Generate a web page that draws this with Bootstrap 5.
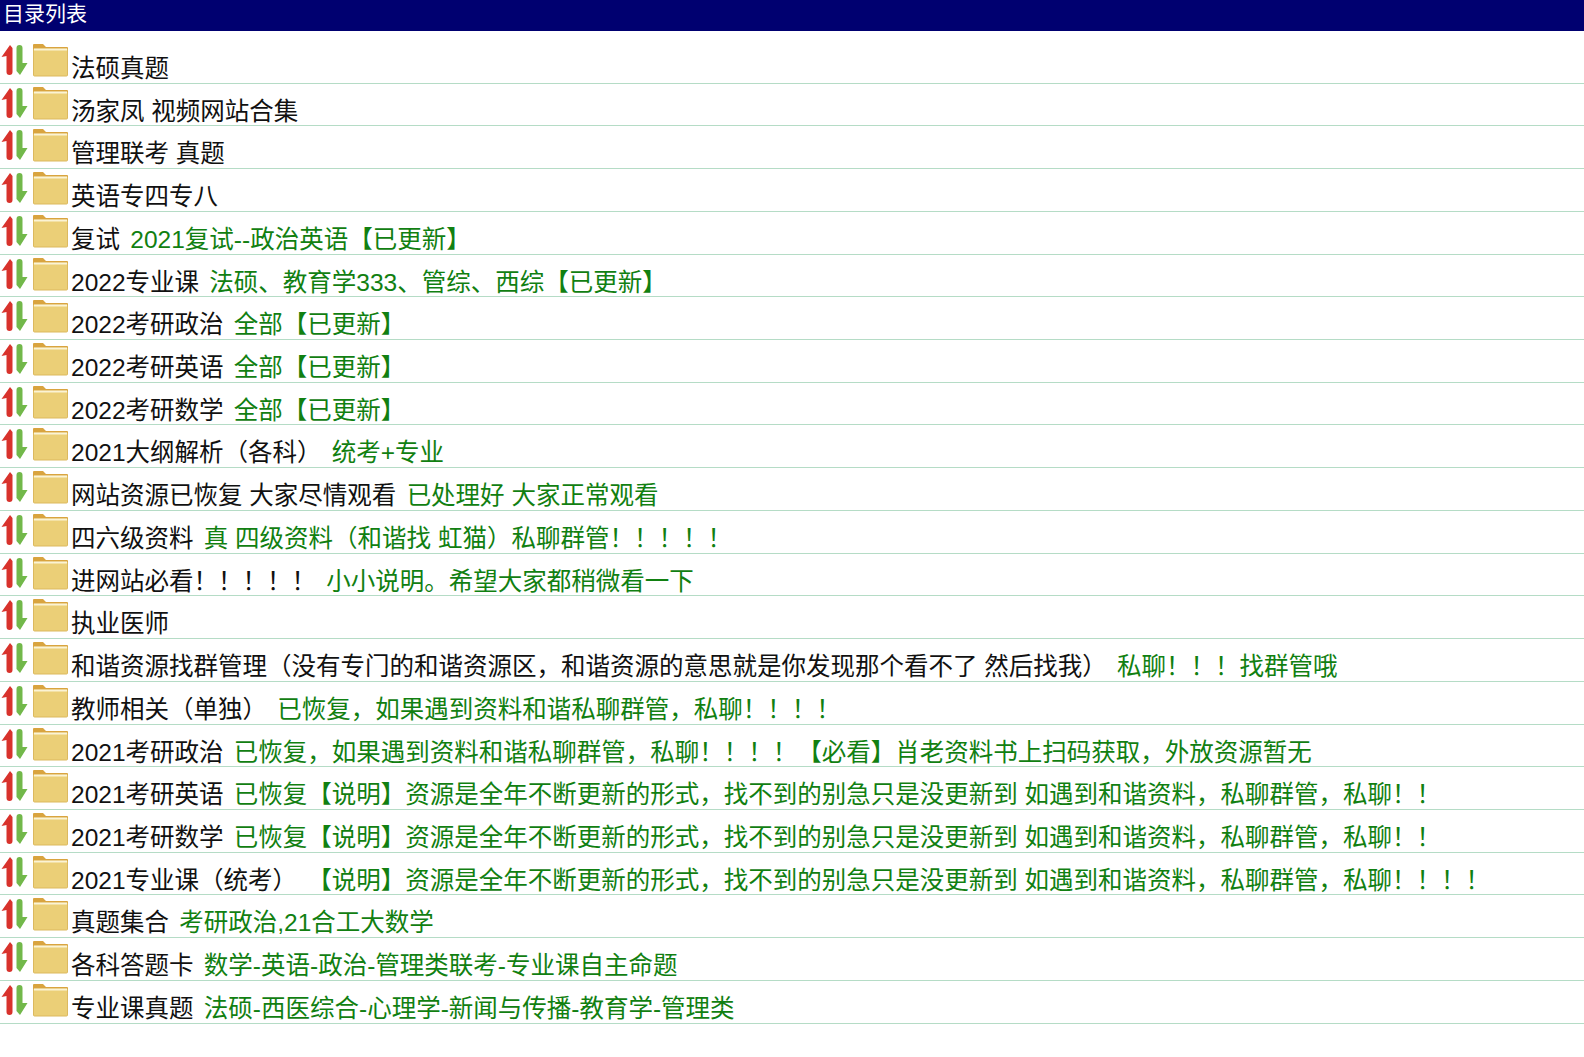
<!DOCTYPE html>
<html lang="zh"><head><meta charset="utf-8"><title>目录列表</title>
<link href="https://cdn.jsdelivr.net/npm/bootstrap@5.3.0/dist/css/bootstrap.min.css" rel="stylesheet">
<style>
body{font-family:"Liberation Sans","Noto Sans CJK SC",sans-serif;color:#000;background:#fff}
.dir-head{background:#000070;color:#fff;height:31px;font-size:21px;line-height:28px;padding-left:3px}
.dir-list{padding-top:10px}
.dir-row{height:42.72px;border-bottom:1px solid #b5dcc6;font-size:24.5px;line-height:30px;color:#111;overflow:hidden;white-space:nowrap}
.dir-ico{flex:none}
.dir-txt{padding-left:1px;padding-top:13px}
.dir-note{color:#118011;margin-left:3.5px}
</style></head><body>
<div class="dir-head">目录列表</div>
<div class="dir-list" id="L"></div>
<script>
const R=[["法硕真题",""],["汤家凤 视频网站合集",""],["管理联考 真题",""],["英语专四专八",""],["复试","2021复试--政治英语【已更新】"],["2022专业课","法硕、教育学333、管综、西综【已更新】"],["2022考研政治","全部【已更新】"],["2022考研英语","全部【已更新】"],["2022考研数学","全部【已更新】"],["2021大纲解析（各科）","统考+专业"],["网站资源已恢复 大家尽情观看","已处理好 大家正常观看"],["四六级资料","真 四级资料（和谐找 虹猫）私聊群管！！！！！"],["进网站必看！！！！！","小小说明。希望大家都稍微看一下"],["执业医师",""],["和谐资源找群管理（没有专门的和谐资源区，和谐资源的意思就是你发现那个看不了 然后找我）","私聊！！！找群管哦"],["教师相关（单独）","已恢复，如果遇到资料和谐私聊群管，私聊！！！！"],["2021考研政治","已恢复，如果遇到资料和谐私聊群管，私聊！！！！【必看】肖老资料书上扫码获取，外放资源暂无"],["2021考研英语","已恢复【说明】资源是全年不断更新的形式，找不到的别急只是没更新到 如遇到和谐资料，私聊群管，私聊！！"],["2021考研数学","已恢复【说明】资源是全年不断更新的形式，找不到的别急只是没更新到 如遇到和谐资料，私聊群管，私聊！！"],["2021专业课（统考）","【说明】资源是全年不断更新的形式，找不到的别急只是没更新到 如遇到和谐资料，私聊群管，私聊！！！！"],["真题集合","考研政治,21合工大数学"],["各科答题卡","数学-英语-政治-管理类联考-专业课自主命题"],["专业课真题","法硕-西医综合-心理学-新闻与传播-教育学-管理类"]];
const ico=`<svg class="dir-ico" width="70" height="37" viewBox="0 0 70 37"><path d="M10 4 L12.5 7 V31 Q12.5 34 9.5 34 Q6.5 34 6.5 31 V15 L1.5 16Z" fill="#d8322c"/><path d="M16.5 7 Q16.5 4 19.5 4 Q22.5 4 22.5 7 V22 L27.5 22 L20 34 L16.5 30Z" fill="#72b84a"/><path d="M33 4 Q33 3 34 3 H43 L46 6 H67 Q68 6 68 7 V12 H33Z" fill="#d9a43f"/><path d="M33.5 8 H67.5 V34 Q67.5 35 66.5 35 H34.5 Q33.5 35 33.5 34Z" fill="#ebcf77" stroke="#dcb95f"/><path d="M34 8.5 H67" stroke="#fbf3d4" stroke-width="2"/></svg>`;
document.getElementById('L').innerHTML=R.map(r=>`<div class="dir-row d-flex">${ico}<div class="dir-txt">${r[0]} <span class="dir-note">${r[1]}</span></div></div>`).join('');
</script>
</body></html>
